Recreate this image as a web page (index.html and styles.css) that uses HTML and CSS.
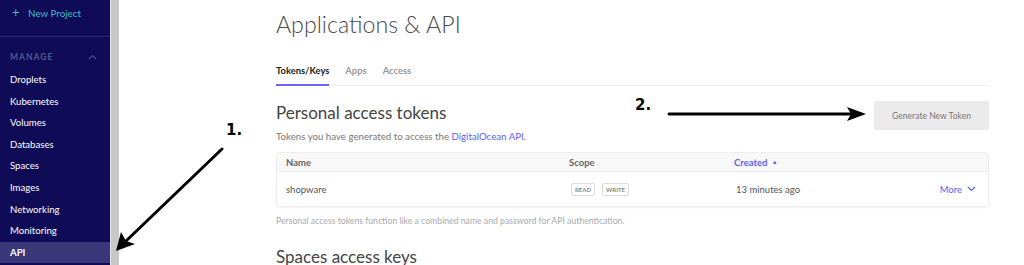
FILE: index.html
```html
<!DOCTYPE html>
<html lang="en">
<head>
  <meta charset="UTF-8">
  <title>Applications &amp; API</title>
  <link rel="stylesheet" href="styles.css">
</head>
<body>
  <div class="page">
    <aside class="sidebar">
      <div class="new-project"><span class="plus">+</span> New Project</div>
      <div class="side-divider"></div>
      <div class="side-head">
        <span>MANAGE</span>
        <svg width="9" height="6" viewBox="0 0 9 6"><path d="M1 5L4.5 1.5L8 5" fill="none" stroke="#4d4a8a" stroke-width="1.2"/></svg>
      </div>
      <ul class="side-nav">
        <li>Droplets</li>
        <li>Kubernetes</li>
        <li>Volumes</li>
        <li>Databases</li>
        <li>Spaces</li>
        <li>Images</li>
        <li>Networking</li>
        <li>Monitoring</li>
        <li class="active">API</li>
      </ul>
    </aside>
    <div class="scroll-strip"></div>

    <main class="main">
      <h1>Applications &amp; API</h1>

      <nav class="tabs">
        <span class="tab active">Tokens/Keys</span>
        <span class="tab">Apps</span>
        <span class="tab">Access</span>
      </nav>

      <div class="section-head">
        <div>
          <h2>Personal access tokens</h2>
          <p class="desc">Tokens you have generated to access the <a href="#">DigitalOcean API.</a></p>
        </div>
        <button class="gen-button">Generate New Token</button>
      </div>

      <div class="token-table">
        <div class="row head">
          <span class="col-name">Name</span>
          <span class="col-scope">Scope</span>
          <span class="col-created sorted">Created <span class="caret">&#9650;</span></span>
          <span class="col-more"></span>
        </div>
        <div class="row">
          <span class="col-name">shopware</span>
          <span class="col-scope"><span class="scope">READ</span><span class="scope">WRITE</span></span>
          <span class="col-created">13 minutes ago</span>
          <span class="col-more">More
            <svg width="9" height="6" viewBox="0 0 9 6"><path d="M1 1L4.5 4.5L8 1" fill="none" stroke="#615efa" stroke-width="1.2"/></svg>
          </span>
        </div>
      </div>

      <p class="note">Personal access tokens function like a combined name and password for API authentication.</p>

      <h2 class="next">Spaces access keys</h2>
    </main>

    <!-- screenshot annotations -->
    <span class="mark mark-1">1.</span>
    <span class="mark mark-2">2.</span>
    <svg class="arrows" width="1024" height="265" viewBox="0 0 1024 265">
      <line x1="222" y1="149" x2="126" y2="241" stroke="#000" stroke-width="3" stroke-linecap="round"/>
      <path d="M116 251L121 232L126 241L135 244Z" fill="#000"/>
      <line x1="669" y1="114" x2="850" y2="114" stroke="#000" stroke-width="3" stroke-linecap="round"/>
      <path d="M866 114L847 107L851 114L847 121Z" fill="#000"/>
    </svg>
  </div>
</body>
</html>
```

FILE: styles.css
```css
body {
  margin: 0;
  font-family: Lato, "Open Sans", Arial, sans-serif;
  background: #fff;
  overflow: hidden;
}
.page {
  position: relative;
  display: flex;
  height: 265px;
}
.sidebar {
  width: 110px;
  flex-shrink: 0;
  background: #0f0b56;
  color: #fff;
  font-size: 9.6px;
}
.new-project {
  color: #3bbfcf;
  padding: 4px 0 0 12px;
  height: 25px;
  font-size: 9.8px;
}
.plus {
  font-size: 13px;
  margin-right: 6px;
}
.side-divider {
  border-top: 1px solid #2a2770;
  margin-top: 7px;
}
.side-head {
  display: flex;
  justify-content: space-between;
  align-items: center;
  padding: 15px 13px 0 10px;
  color: #58578e;
  font-size: 8.5px;
  font-weight: bold;
  letter-spacing: 1px;
}
.side-nav {
  list-style: none;
  margin: 7px 0 0 0;
  padding: 0;
}
.side-nav li {
  height: 21.6px;
  line-height: 21.6px;
  padding-left: 10px;
}
.side-nav li.active {
  background: #3a3879;
  font-weight: bold;
}
.scroll-strip {
  width: 8px;
  flex-shrink: 0;
  background: #c8c8c8;
  border-left: 1px solid #e4e4ee;
}
.main {
  flex: 1;
  padding: 0 35px 0 157px;
  color: #444;
}
h1 {
  margin: 10px 0 0 0;
  font-size: 23.2px;
  font-weight: 300;
  color: #4a4a4a;
}
.tabs {
  display: flex;
  gap: 16px;
  margin-top: 27px;
  border-bottom: 1px solid #eee;
  font-size: 9.4px;
}
.tab {
  color: #999;
  padding-bottom: 8px;
  font-weight: bold;
}
.tab.active {
  color: #222;
  border-bottom: 2px solid #6a67f6;
  margin-bottom: -1px;
}
.section-head {
  display: flex;
  justify-content: space-between;
  align-items: flex-start;
  margin-top: 12px;
}
h2 {
  margin: 4px 0 0 0;
  font-size: 17px;
  font-weight: normal;
  color: #444;
}
.desc {
  margin: 7px 0 0 0;
  font-size: 9.7px;
  color: #777;
}
.desc a {
  color: #615efa;
  text-decoration: none;
}
.gen-button {
  margin-top: 3px;
  width: 115px;
  height: 29px;
  border: none;
  border-radius: 2px;
  background: #ebebeb;
  color: #777;
  font-family: inherit;
  font-size: 8.6px;
}
.token-table {
  margin-top: 10px;
  border: 1px solid #eee;
  border-radius: 3px;
  box-shadow: 0 1px 2px rgba(0, 0, 0, 0.04);
  font-size: 9.5px;
}
.row {
  display: flex;
  align-items: center;
  height: 34px;
  padding: 0 12px 0 9px;
  color: #555;
}
.row.head {
  height: 18px;
  background: #f8f8f8;
  border-bottom: 1px solid #eee;
  font-weight: bold;
  color: #666;
}
.col-name {
  width: 283px;
}
.col-scope {
  width: 165px;
  display: flex;
  gap: 7px;
}
.row .col-scope {
  padding-left: 2px;
}
.row.head .col-scope {
  padding-left: 0;
}
.col-created {
  flex: 1;
}
.sorted {
  color: #615efa;
}
.caret {
  font-size: 6px;
  vertical-align: 2px;
  margin-left: 2px;
}
.col-more {
  color: #615efa;
  display: flex;
  align-items: center;
  gap: 5px;
}
.scope {
  border: 1px solid #ddd;
  border-radius: 2px;
  padding: 2px 3px;
  font-size: 6px;
  color: #888;
  font-weight: bold;
}
.note {
  margin: 8px 0 0 0;
  font-size: 8.7px;
  color: #aaa;
}
h2.next {
  margin-top: 20px;
}
.mark {
  position: absolute;
  font-family: "DejaVu Sans", sans-serif;
  font-weight: bold;
  font-size: 15px;
  color: #000;
}
.mark-1 {
  left: 226px;
  top: 121px;
}
.mark-2 {
  left: 635px;
  top: 96px;
}
.arrows {
  position: absolute;
  left: 0;
  top: 0;
  pointer-events: none;
}
```
